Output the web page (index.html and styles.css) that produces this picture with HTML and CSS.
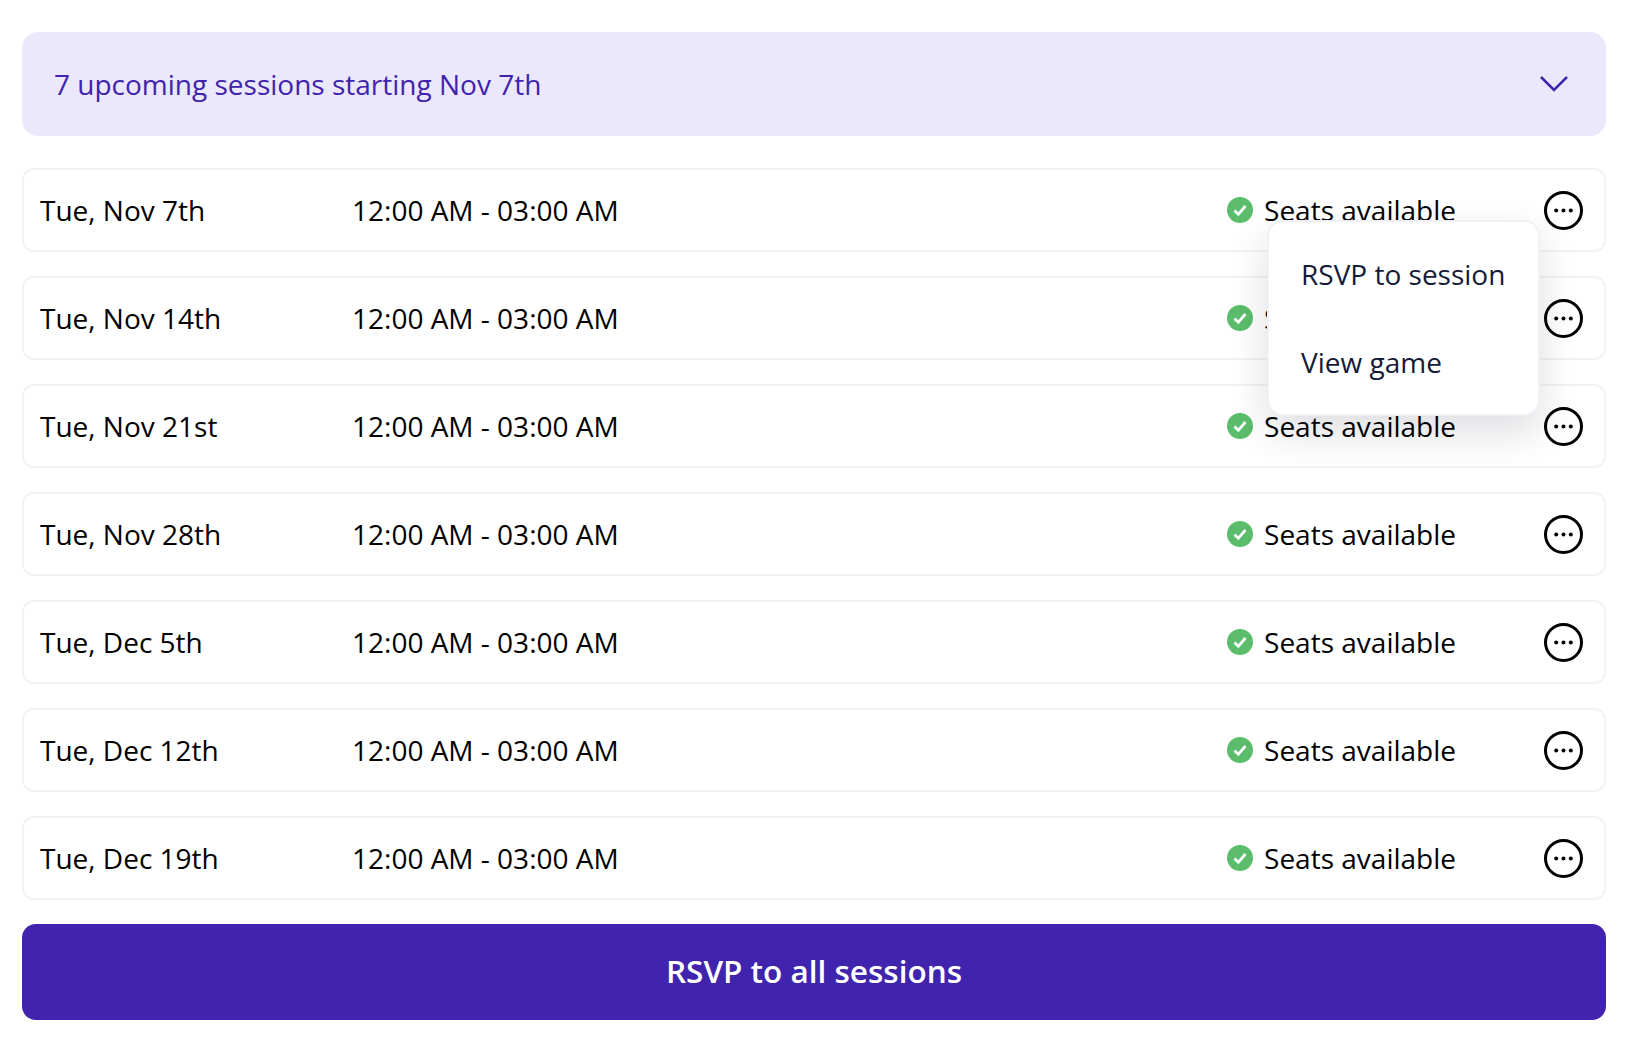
FILE: index.html
```html
<!DOCTYPE html>
<html lang="en">
<head>
  <meta charset="UTF-8" />
  <title>Upcoming sessions</title>
  <meta name="viewport" content="width=device-width, initial-scale=1.0" />
  <link rel="stylesheet" href="styles.css">
</head>
<body>
  <div class="sessions">
    <div class="banner">
      <span>7 upcoming sessions starting Nov 7th</span>
      <svg class="chevron" width="30" height="18" viewBox="0 0 30 18"><path d="M2 2 L15 15 L28 2" /></svg>
    </div>

    <ul class="session-list">
      <li class="session">
        <span class="date">Tue, Nov 7th</span>
        <span class="time">12:00 AM - 03:00 AM</span>
        <span class="status">
          <svg class="check" width="26" height="26" viewBox="0 0 26 26"><circle cx="13" cy="13" r="13" /><path d="M7.5 13.5 L11.3 17.3 L18.5 9" /></svg>
          Seats available
        </span>
        <svg class="more" width="41" height="41" viewBox="0 0 41 41"><circle class="ring" cx="20.5" cy="20.5" r="18" /><circle cx="13.2" cy="20.5" r="2" /><circle cx="20.5" cy="20.5" r="2" /><circle cx="27.8" cy="20.5" r="2" /></svg>
        <div class="menu">
          <a>RSVP to session</a>
          <a>View game</a>
        </div>
      </li>
      <li class="session">
        <span class="date">Tue, Nov 14th</span>
        <span class="time">12:00 AM - 03:00 AM</span>
        <span class="status">
          <svg class="check" width="26" height="26" viewBox="0 0 26 26"><circle cx="13" cy="13" r="13" /><path d="M7.5 13.5 L11.3 17.3 L18.5 9" /></svg>
          Seats available
        </span>
        <svg class="more" width="41" height="41" viewBox="0 0 41 41"><circle class="ring" cx="20.5" cy="20.5" r="18" /><circle cx="13.2" cy="20.5" r="2" /><circle cx="20.5" cy="20.5" r="2" /><circle cx="27.8" cy="20.5" r="2" /></svg>
      </li>
      <li class="session">
        <span class="date">Tue, Nov 21st</span>
        <span class="time">12:00 AM - 03:00 AM</span>
        <span class="status">
          <svg class="check" width="26" height="26" viewBox="0 0 26 26"><circle cx="13" cy="13" r="13" /><path d="M7.5 13.5 L11.3 17.3 L18.5 9" /></svg>
          Seats available
        </span>
        <svg class="more" width="41" height="41" viewBox="0 0 41 41"><circle class="ring" cx="20.5" cy="20.5" r="18" /><circle cx="13.2" cy="20.5" r="2" /><circle cx="20.5" cy="20.5" r="2" /><circle cx="27.8" cy="20.5" r="2" /></svg>
      </li>
      <li class="session">
        <span class="date">Tue, Nov 28th</span>
        <span class="time">12:00 AM - 03:00 AM</span>
        <span class="status">
          <svg class="check" width="26" height="26" viewBox="0 0 26 26"><circle cx="13" cy="13" r="13" /><path d="M7.5 13.5 L11.3 17.3 L18.5 9" /></svg>
          Seats available
        </span>
        <svg class="more" width="41" height="41" viewBox="0 0 41 41"><circle class="ring" cx="20.5" cy="20.5" r="18" /><circle cx="13.2" cy="20.5" r="2" /><circle cx="20.5" cy="20.5" r="2" /><circle cx="27.8" cy="20.5" r="2" /></svg>
      </li>
      <li class="session">
        <span class="date">Tue, Dec 5th</span>
        <span class="time">12:00 AM - 03:00 AM</span>
        <span class="status">
          <svg class="check" width="26" height="26" viewBox="0 0 26 26"><circle cx="13" cy="13" r="13" /><path d="M7.5 13.5 L11.3 17.3 L18.5 9" /></svg>
          Seats available
        </span>
        <svg class="more" width="41" height="41" viewBox="0 0 41 41"><circle class="ring" cx="20.5" cy="20.5" r="18" /><circle cx="13.2" cy="20.5" r="2" /><circle cx="20.5" cy="20.5" r="2" /><circle cx="27.8" cy="20.5" r="2" /></svg>
      </li>
      <li class="session">
        <span class="date">Tue, Dec 12th</span>
        <span class="time">12:00 AM - 03:00 AM</span>
        <span class="status">
          <svg class="check" width="26" height="26" viewBox="0 0 26 26"><circle cx="13" cy="13" r="13" /><path d="M7.5 13.5 L11.3 17.3 L18.5 9" /></svg>
          Seats available
        </span>
        <svg class="more" width="41" height="41" viewBox="0 0 41 41"><circle class="ring" cx="20.5" cy="20.5" r="18" /><circle cx="13.2" cy="20.5" r="2" /><circle cx="20.5" cy="20.5" r="2" /><circle cx="27.8" cy="20.5" r="2" /></svg>
      </li>
      <li class="session">
        <span class="date">Tue, Dec 19th</span>
        <span class="time">12:00 AM - 03:00 AM</span>
        <span class="status">
          <svg class="check" width="26" height="26" viewBox="0 0 26 26"><circle cx="13" cy="13" r="13" /><path d="M7.5 13.5 L11.3 17.3 L18.5 9" /></svg>
          Seats available
        </span>
        <svg class="more" width="41" height="41" viewBox="0 0 41 41"><circle class="ring" cx="20.5" cy="20.5" r="18" /><circle cx="13.2" cy="20.5" r="2" /><circle cx="20.5" cy="20.5" r="2" /><circle cx="27.8" cy="20.5" r="2" /></svg>
      </li>
    </ul>

    <button class="rsvp-all">RSVP to all sessions</button>
  </div>
</body>
</html>
```

FILE: styles.css
```css
body {
  margin: 0;
  background: #fff;
  color: #000;
  font-family: "Open Sans", sans-serif;
  font-size: 28px;
}

.sessions {
  padding: 32px 20px 40px 22px;
}

.banner {
  display: flex;
  align-items: center;
  justify-content: space-between;
  height: 104px;
  padding: 0 37px 0 32px;
  box-sizing: border-box;
  background: #ebe8fc;
  border-radius: 16px;
  color: #4024ae;
}

.chevron {
  fill: none;
  stroke: #4024ae;
  stroke-width: 2.5;
}

.session-list {
  list-style: none;
  margin: 32px 0 0;
  padding: 0;
  display: flex;
  flex-direction: column;
  gap: 24px;
}

.session {
  position: relative;
  display: flex;
  align-items: center;
  height: 84px;
  box-sizing: border-box;
  padding: 0 20px 0 16px;
  border: 2px solid #f3f3f5;
  border-radius: 12px;
}

.date {
  width: 312px;
}

.status {
  display: flex;
  align-items: center;
  gap: 11px;
  margin-left: auto;
  margin-right: 87px;
}

.check circle {
  fill: #5bbd6c;
}

.check path {
  fill: none;
  stroke: #fff;
  stroke-width: 2.8;
}

.more {
  fill: #000;
}

.more .ring {
  fill: none;
  stroke: #000;
  stroke-width: 3;
}

.menu {
  position: absolute;
  z-index: 2;
  top: 50px;
  right: 64px;
  width: 273px;
  height: 196px;
  box-sizing: border-box;
  display: flex;
  flex-direction: column;
  padding: 33px 0 0 32px;
  gap: 50px;
  background: #fff;
  border: 2px solid #f0f0f6;
  border-radius: 16px;
  box-shadow: 0 16px 40px rgba(20, 20, 40, 0.14);
  color: #141b38;
}

.rsvp-all {
  display: block;
  width: 100%;
  height: 96px;
  margin-top: 24px;
  padding-bottom: 4px;
  border: none;
  border-radius: 14px;
  background: #4024ae;
  color: #fff;
  font-family: inherit;
  font-size: 31.5px;
  font-weight: 600;
}
```
